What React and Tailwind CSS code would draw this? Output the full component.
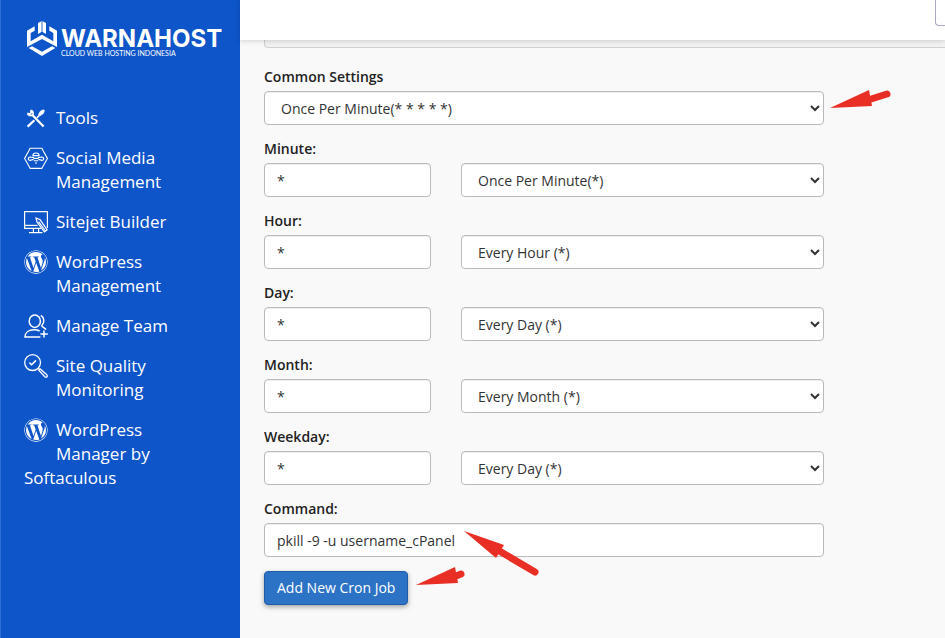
import { FaWordpress } from 'react-icons/fa';

const FIELDS = [
  { id: 'minute', label: 'Minute:', option: 'Once Per Minute(*)' },
  { id: 'hour', label: 'Hour:', option: 'Every Hour (*)' },
  { id: 'day', label: 'Day:', option: 'Every Day (*)' },
  { id: 'month', label: 'Month:', option: 'Every Month (*)' },
  { id: 'weekday', label: 'Weekday:', option: 'Every Day (*)' },
];

const control = 'block w-full h-[34px] rounded border border-[#bbb] bg-white px-3 text-sm text-[#333] shadow-[inset_0_1px_1px_rgba(0,0,0,0.075)]';
const labelCls = 'block mb-1 text-sm leading-5 font-semibold text-[#222]';

function Icon({ children, width = 1.3 }) {
  return (
    <svg viewBox="0 0 24 24" className="size-6" fill="none" stroke="currentColor" strokeWidth={width} aria-hidden="true">
      {children}
    </svg>
  );
}

function ToolsIcon() {
  return (
    <Icon width={1.6}>
      <path d="M8.4 9 L19.6 20.6" strokeWidth="2.2" />
      <path d="M3.4 7.4 C4.2 9.6 6.6 10 8.4 9 C9.8 7.6 9.4 4.6 6.6 4.2 M6.4 4.4 L7.4 6.6 L5.8 8 L3.4 7.2" />
      <path d="M3.6 20.6 L10.4 14.2" strokeWidth="2.2" />
      <path d="M12.8 11.8 L15.4 9.4" />
      <path d="M14.6 8.4 L16.4 5.2 L19.6 3.8 L20.4 4.6 L19.2 7.6 L16 9.8Z" fill="currentColor" strokeWidth="0.8" />
    </Icon>
  );
}

function SocialIcon() {
  return (
    <Icon width={1.1}>
      <path d="M6.2 2.2 H17.8 L23.4 12.4 L17.8 22.4 H6.2 L0.6 12.4Z" />
      <path d="M8.8 9.8 C9 6 15 6 15.2 9.8 M8.4 9.6 H15.6" />
      <path d="M10 11.6 L6 11 C3.6 11.6 3.8 14 6 14.4 L9.6 13.4 M14 11.6 L18 11 C20.4 11.6 20.2 14 18 14.4 L14.4 13.4" />
      <path d="M9.6 12.4 H14.4 M9.8 14.8 H14.2 M11 17 H13" />
    </Icon>
  );
}

function SitejetIcon() {
  return (
    <Icon width={1.2}>
      <path d="M17 18.4 H0.6 V1.6 H23.4 V18" />
      <path d="M0.6 15.4 H13.5" />
      <path d="M9.4 18.4 V22 M14.6 18.4 V22 M5 22.6 H18.4" />
      <path d="M12 8 L16 9.6 L23.2 19.8 L20.4 22 L13 12Z M14.6 11.6 L21.4 21" />
    </Icon>
  );
}

function TeamIcon() {
  return (
    <Icon width={1.5}>
      <ellipse cx="10.8" cy="7.2" rx="5.6" ry="6.2" />
      <path d="M16.8 1.4 C20.4 3.4 20.8 8.4 17.8 11.6 C18 13.4 20.6 13.6 22 15.6" />
      <path d="M16.4 23 H1 C1 18.6 4.6 15.8 10 15.8 C12.4 15.8 14.2 16.2 15.6 17" />
      <path d="M20 16.4 V23.6 M16.4 20 H23.8" />
    </Icon>
  );
}

function QualityIcon() {
  return (
    <Icon width={1.3}>
      <circle cx="8.6" cy="8.6" r="7.9" />
      <path d="M5.4 8.6 L7.6 10.8 L12 6.4" strokeWidth="1.5" />
      <path d="M14.2 14.2 L16 16" />
      <path d="M16 14.8 L22.8 20.8 C24 22.4 22.6 24 20.8 22.8 L14.8 16.2Z" />
    </Icon>
  );
}

const MENU = [
  { label: 'Tools', icon: <ToolsIcon /> },
  { label: 'Social Media Management', icon: <SocialIcon /> },
  { label: 'Sitejet Builder', icon: <SitejetIcon /> },
  { label: 'WordPress Management', icon: <FaWordpress className="size-6" /> },
  { label: 'Manage Team', icon: <TeamIcon /> },
  { label: 'Site Quality Monitoring', icon: <QualityIcon /> },
  { label: 'WordPress Manager by Softaculous', icon: <FaWordpress className="size-6" /> },
];

function Logo() {
  return (
    <a href="#home" className="flex items-start text-white">
      <svg viewBox="0 0 90 105" className="w-[30px] h-[35px] shrink-0" fill="currentColor" aria-hidden="true">
        <path d="M0 29 L23 16 V29 L11 36 V61 L45 41 L79 61 V36 L67 29 V16 L90 29 V78 L45 54 L0 78Z" />
        <path d="M5 81 L15 76 L45 92 L75 76 L85 81 L45 105Z" />
        <path d="M33 6 L43 1 V33 L33 39Z" />
        <path d="M47 1 L57 6 V39 L47 33Z" />
        <path d="M43 1 L45 0 L47 1 V33 L45 32 L43 33Z" opacity="0.55" />
      </svg>
      <span className="ml-1 pt-2">
        <span className="block font-[Inter] text-[24px] leading-5 font-bold">WARNAHOST</span>
        <span className="block font-[Lato] text-[7px] leading-2 whitespace-nowrap">CLOUD WEB HOSTING INDONESIA</span>
      </span>
    </a>
  );
}

function Sidebar() {
  return (
    <aside className="w-60 shrink-0 bg-[#0d55c8] border-l border-[#2d6fd4] text-white">
      <div className="h-14 pt-[21px] pl-[26px]">
        <Logo />
      </div>
      <nav className="mt-[50px] pl-[23px] pr-6">
        <ul className="space-y-4">
          {MENU.map(({ label, icon }) => (
            <li key={label}>
              {/* the float is taller than one line, so a third line runs under the icon */}
              <a href="#menu" className="block text-[17px] leading-6">
                <span className="float-left mr-2 h-10 w-6">{icon}</span>
                {label}
              </a>
            </li>
          ))}
        </ul>
      </nav>
    </aside>
  );
}

// red marker, the tip is the first point of the head
function Arrow({ head, from, to, box, className }) {
  return (
    <svg viewBox={box} className={`absolute z-10 pointer-events-none ${className}`} aria-hidden="true">
      <path d={head} fill="#e92f25" />
      <path d={`M${from} L${to}`} stroke="#e92f25" strokeWidth="7" strokeLinecap="round" />
    </svg>
  );
}

export default function App() {
  return (
    <div className="flex min-h-screen overflow-hidden bg-[#f9f9f9] font-['Open_Sans',sans-serif]">
      <Sidebar />
      <div className="flex-1 min-w-0">
        <header className="relative z-10 flex h-10 items-start justify-end bg-white shadow-[0_1px_5px_rgba(0,0,0,0.16)]">
          <button type="button" aria-label="Menu" className="h-[26px] w-[10px] rounded-bl border-b border-l border-[#a9abc0] bg-white" />
        </header>

        <main className="pl-6 pb-8">
          <div className="h-2 rounded-bl border-b border-l border-[#d0d0d0] bg-[#f2f2f2]" />

          <form className="mt-[19px] w-full max-w-[560px] space-y-[14px]" onSubmit={(e) => e.preventDefault()}>
            <div>
              <label htmlFor="common" className={labelCls}>Common Settings</label>
              <div className="relative">
                <select id="common" className={control}>
                  <option>Once Per Minute(* * * * *)</option>
                </select>
                <Arrow
                  box="0 0 64 22"
                  className="left-full -top-1 ml-1 w-16 h-[22px]"
                  head="M2 21 L41 3 L44 19Z"
                  from="40 13"
                  to="59 7"
                />
              </div>
            </div>

            {FIELDS.map(({ id, label, option }) => (
              <div key={id}>
                <label htmlFor={id} className={labelCls}>{label}</label>
                <div className="grid grid-cols-[167px_1fr] gap-[30px]">
                  <input id={id} type="text" defaultValue="*" className={control} />
                  <select aria-label={`${label} common values`} className={control}>
                    <option>{option}</option>
                  </select>
                </div>
              </div>
            ))}

            <div>
              <label htmlFor="command" className={labelCls}>Command:</label>
              <div className="relative">
                <input id="command" type="text" defaultValue="pkill -9 -u username_cPanel" className={control} />
                <Arrow
                  box="0 0 80 50"
                  className="left-[198px] top-2 w-20 h-[50px]"
                  head="M2 0 L42 14 L34 27Z"
                  from="34 18"
                  to="73 41"
                />
              </div>
            </div>

            <div className="relative inline-block">
              <button
                type="submit"
                className="h-[34px] rounded-sm border border-[#1f5da8] bg-[#2d73c5] px-3 text-sm text-white shadow-[0_2px_5px_rgba(0,0,0,0.35)]"
              >
                Add New Cron Job
              </button>
              <Arrow
                box="0 0 52 22"
                className="left-full -top-1 ml-2 w-[52px] h-[22px]"
                head="M0 18 L39 0 L42 16Z"
                from="40 9"
                to="45 7"
              />
            </div>
          </form>
        </main>
      </div>
    </div>
  );
}
